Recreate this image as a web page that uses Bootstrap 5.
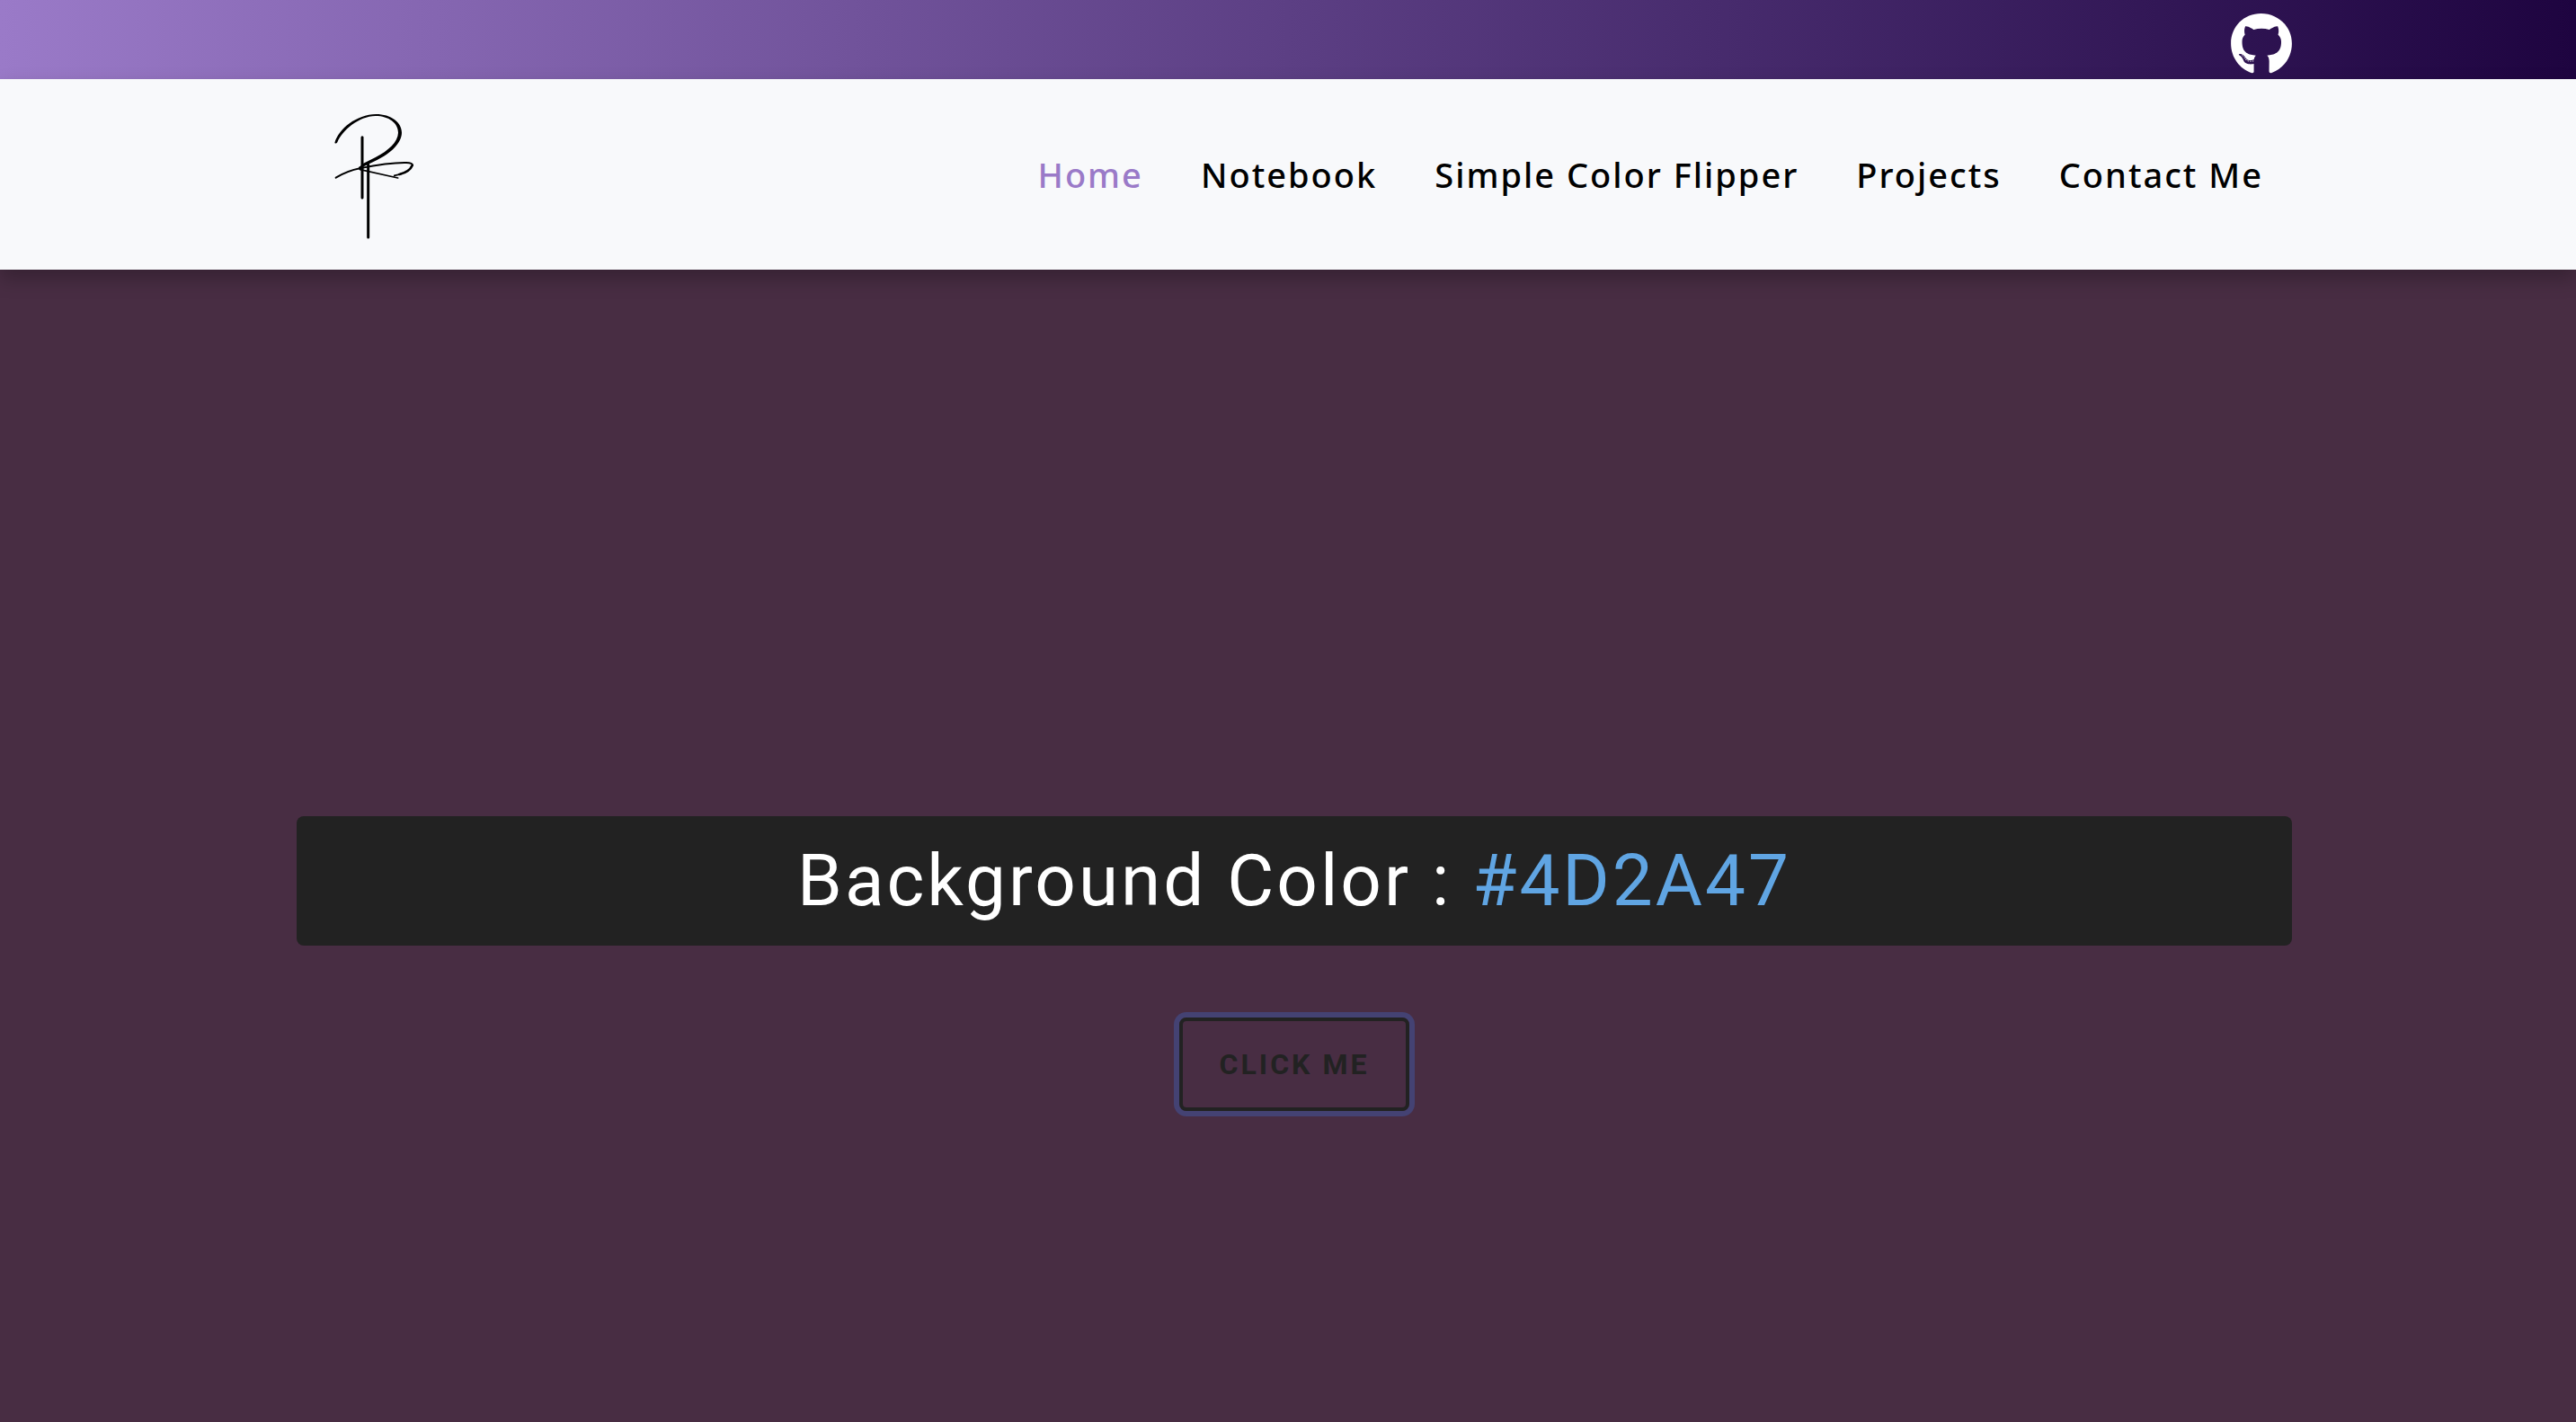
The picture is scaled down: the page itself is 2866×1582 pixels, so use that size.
<!DOCTYPE html>
<html lang="en">
<head>
<meta charset="utf-8">
<meta name="viewport" content="width=device-width, initial-scale=1">
<title>Simple Color Flipper</title>
<link href="https://cdn.jsdelivr.net/npm/bootstrap@5.3.0/dist/css/bootstrap.min.css" rel="stylesheet">
<style>
  body { background: #482d43; font-family: Roboto, sans-serif; letter-spacing: 3px; }
  .page-wrap { max-width: 2234px; padding-left: 14px; }
  .top-strip { height: 88px; background: linear-gradient(to right, #9a7ac8, #1e0440); }
  .top-strip svg { width: 68px; height: 70px; margin-top: 14px; }
  .site-nav { padding: 12px 0; background: #f8f9fb; box-shadow: 0 10px 20px rgba(0, 0, 0, .25); --bs-navbar-nav-link-padding-x: 32px; }
  .site-nav .navbar-brand { margin-left: 10px; padding: 0; }
  .site-nav .navbar-brand svg { width: 160px; height: 188px; }
  .site-nav .nav-link { color: #000; font: 500 38px/60px "Noto Sans", sans-serif; letter-spacing: 2px; }
  .site-nav .nav-link.active { color: #9a7ac8; }
  .flipper { padding-top: 262px; }
  .color-title { background: #222; color: #fff; font-size: 80px; font-weight: 400; line-height: 96px; padding: 24px; border-radius: 8px; margin-bottom: 80px; }
  .color-title span { color: #60a5e3; }
  .btn-flip, .btn-flip:hover { color: #222; background: transparent; border: 4px solid #222; border-radius: 8px; padding: 24px 41px; font-size: 32px; line-height: 48px; font-weight: 700; letter-spacing: 3px; box-shadow: 0 0 0 6px #444273; }
</style>
<script src="https://cdn.jsdelivr.net/npm/bootstrap@5.3.0/dist/js/bootstrap.bundle.min.js"></script>
</head>
<body class="min-vh-100 d-flex flex-column">
  <div class="top-strip">
    <div class="page-wrap mx-auto d-flex justify-content-end">
      <a href="#" class="text-white d-flex" aria-label="GitHub">
        <svg viewBox="0 0 496 512" fill="currentColor" aria-hidden="true"><path d="M165.9 397.4c0 2-2.3 3.6-5.2 3.6-3.3.3-5.6-1.3-5.6-3.6 0-2 2.3-3.6 5.2-3.6 3-.3 5.6 1.3 5.6 3.6zm-31.1-4.5c-.7 2 1.3 4.3 4.3 4.9 2.6 1 5.6 0 6.2-2s-1.3-4.3-4.3-5.2c-2.6-.7-5.5.3-6.2 2.3zm44.2-1.7c-2.9.7-4.9 2.6-4.6 4.9.3 2 2.9 3.3 5.9 2.6 2.9-.7 4.9-2.6 4.6-4.6-.3-1.9-3-3.2-5.9-2.9zM244.8 8C106.1 8 0 113.3 0 252c0 110.9 69.8 205.8 169.5 239.2 12.8 2.3 17.3-5.6 17.3-12.1 0-6.2-.3-40.4-.3-61.4 0 0-70 15-84.7-29.8 0 0-11.4-29.1-27.8-36.6 0 0-22.9-15.7 1.6-15.4 0 0 24.9 2 38.6 25.8 21.9 38.6 58.6 27.5 72.9 20.9 2.3-16 8.8-27.1 16-33.7-55.9-6.2-112.3-14.3-112.3-110.5 0-27.5 7.6-41.3 23.6-58.9-2.6-6.5-11.1-33.3 2.6-67.9 20.9-6.5 69 27 69 27 20-5.6 41.5-8.5 62.8-8.5s42.8 2.9 62.8 8.5c0 0 48.1-33.6 69-27 13.7 34.7 5.2 61.4 2.6 67.9 16 17.7 25.8 31.5 25.8 58.9 0 96.5-58.9 104.2-114.8 110.5 9.2 7.9 17 22.9 17 46.4 0 33.7-.3 75.4-.3 83.6 0 6.5 4.6 14.4 17.3 12.1C428.2 457.8 496 362.9 496 252 496 113.3 383.5 8 244.8 8zM97.2 352.9c-1.3 1-1 3.3.7 5.2 1.6 1.6 3.9 2.3 5.2 1 1.3-1 1-3.3-.7-5.2-1.6-1.6-3.9-2.3-5.2-1zm-10.8-8.1c-.7 1.3.3 2.9 2.3 3.9 1.6 1 3.6.7 4.3-.7.7-1.3-.3-2.9-2.3-3.9-2-.6-3.6-.3-4.3.7zm32.4 35.6c-1.6 1.3-1 4.3 1.3 6.2 2.3 2.3 5.2 2.6 6.5 1 1.3-1.3.7-4.3-1.3-6.2-2.2-2.3-5.2-2.6-6.5-1zm-11.4-14.7c-1.6 1-1.6 3.6 0 5.9 1.6 2.3 4.3 3.3 5.6 2.3 1.6-1.3 1.6-3.9 0-6.2-1.4-2.3-4-3.3-5.6-2z"/></svg>
      </a>
    </div>
  </div>
  <nav class="navbar navbar-expand site-nav">
    <div class="page-wrap mx-auto w-100 d-flex align-items-center justify-content-between">
      <a class="navbar-brand d-flex" href="#" aria-label="Start page">
        <svg viewBox="0 0 480 564" fill="none" stroke="#000" stroke-linecap="round" stroke-linejoin="round" aria-hidden="true">
          <path stroke-width="9" d="M189 158V360"/>
          <path stroke-width="9" d="M209 250V492"/>
          <path stroke="none" fill="#000" d="M97 177C110 130 170 82 235 81C285 81 321 108 321 143C320 178 285 210 240 233L194 256C184 269 180 270 176 262L190 247L232 226C277 202 308 174 309 143C309 111 278 87 233 87C178 88 122 135 106 175Q102 181 97 177Z"/>
          <path stroke-width="6" d="M101 293C125 279 150 268 181 262C235 251 290 242 336 243Q358 244 357 252"/>
          <path stroke-width="8" d="M356 252C350 267 333 277 313 282"/>
          <path stroke-width="5" d="M318 281L296 286M182 266L308 294"/>
          <circle cx="183" cy="261" r="6" fill="#000" stroke="none"/>
        </svg>
      </a>
      <ul class="navbar-nav">
        <li class="nav-item"><a class="nav-link active" aria-current="page" href="#">Home</a></li>
        <li class="nav-item"><a class="nav-link" href="#">Notebook</a></li>
        <li class="nav-item"><a class="nav-link" href="#">Simple Color Flipper</a></li>
        <li class="nav-item"><a class="nav-link" href="#">Projects</a></li>
        <li class="nav-item"><a class="nav-link" href="#">Contact Me</a></li>
      </ul>
    </div>
  </nav>
  <main class="flipper flex-grow-1 d-flex flex-column justify-content-center">
    <div class="page-wrap mx-auto w-100 text-center">
      <h2 class="color-title">Background Color : <span>#4D2A47</span></h2>
      <button type="button" class="btn btn-flip text-uppercase">Click me</button>
    </div>
  </main>
</body>
</html>
